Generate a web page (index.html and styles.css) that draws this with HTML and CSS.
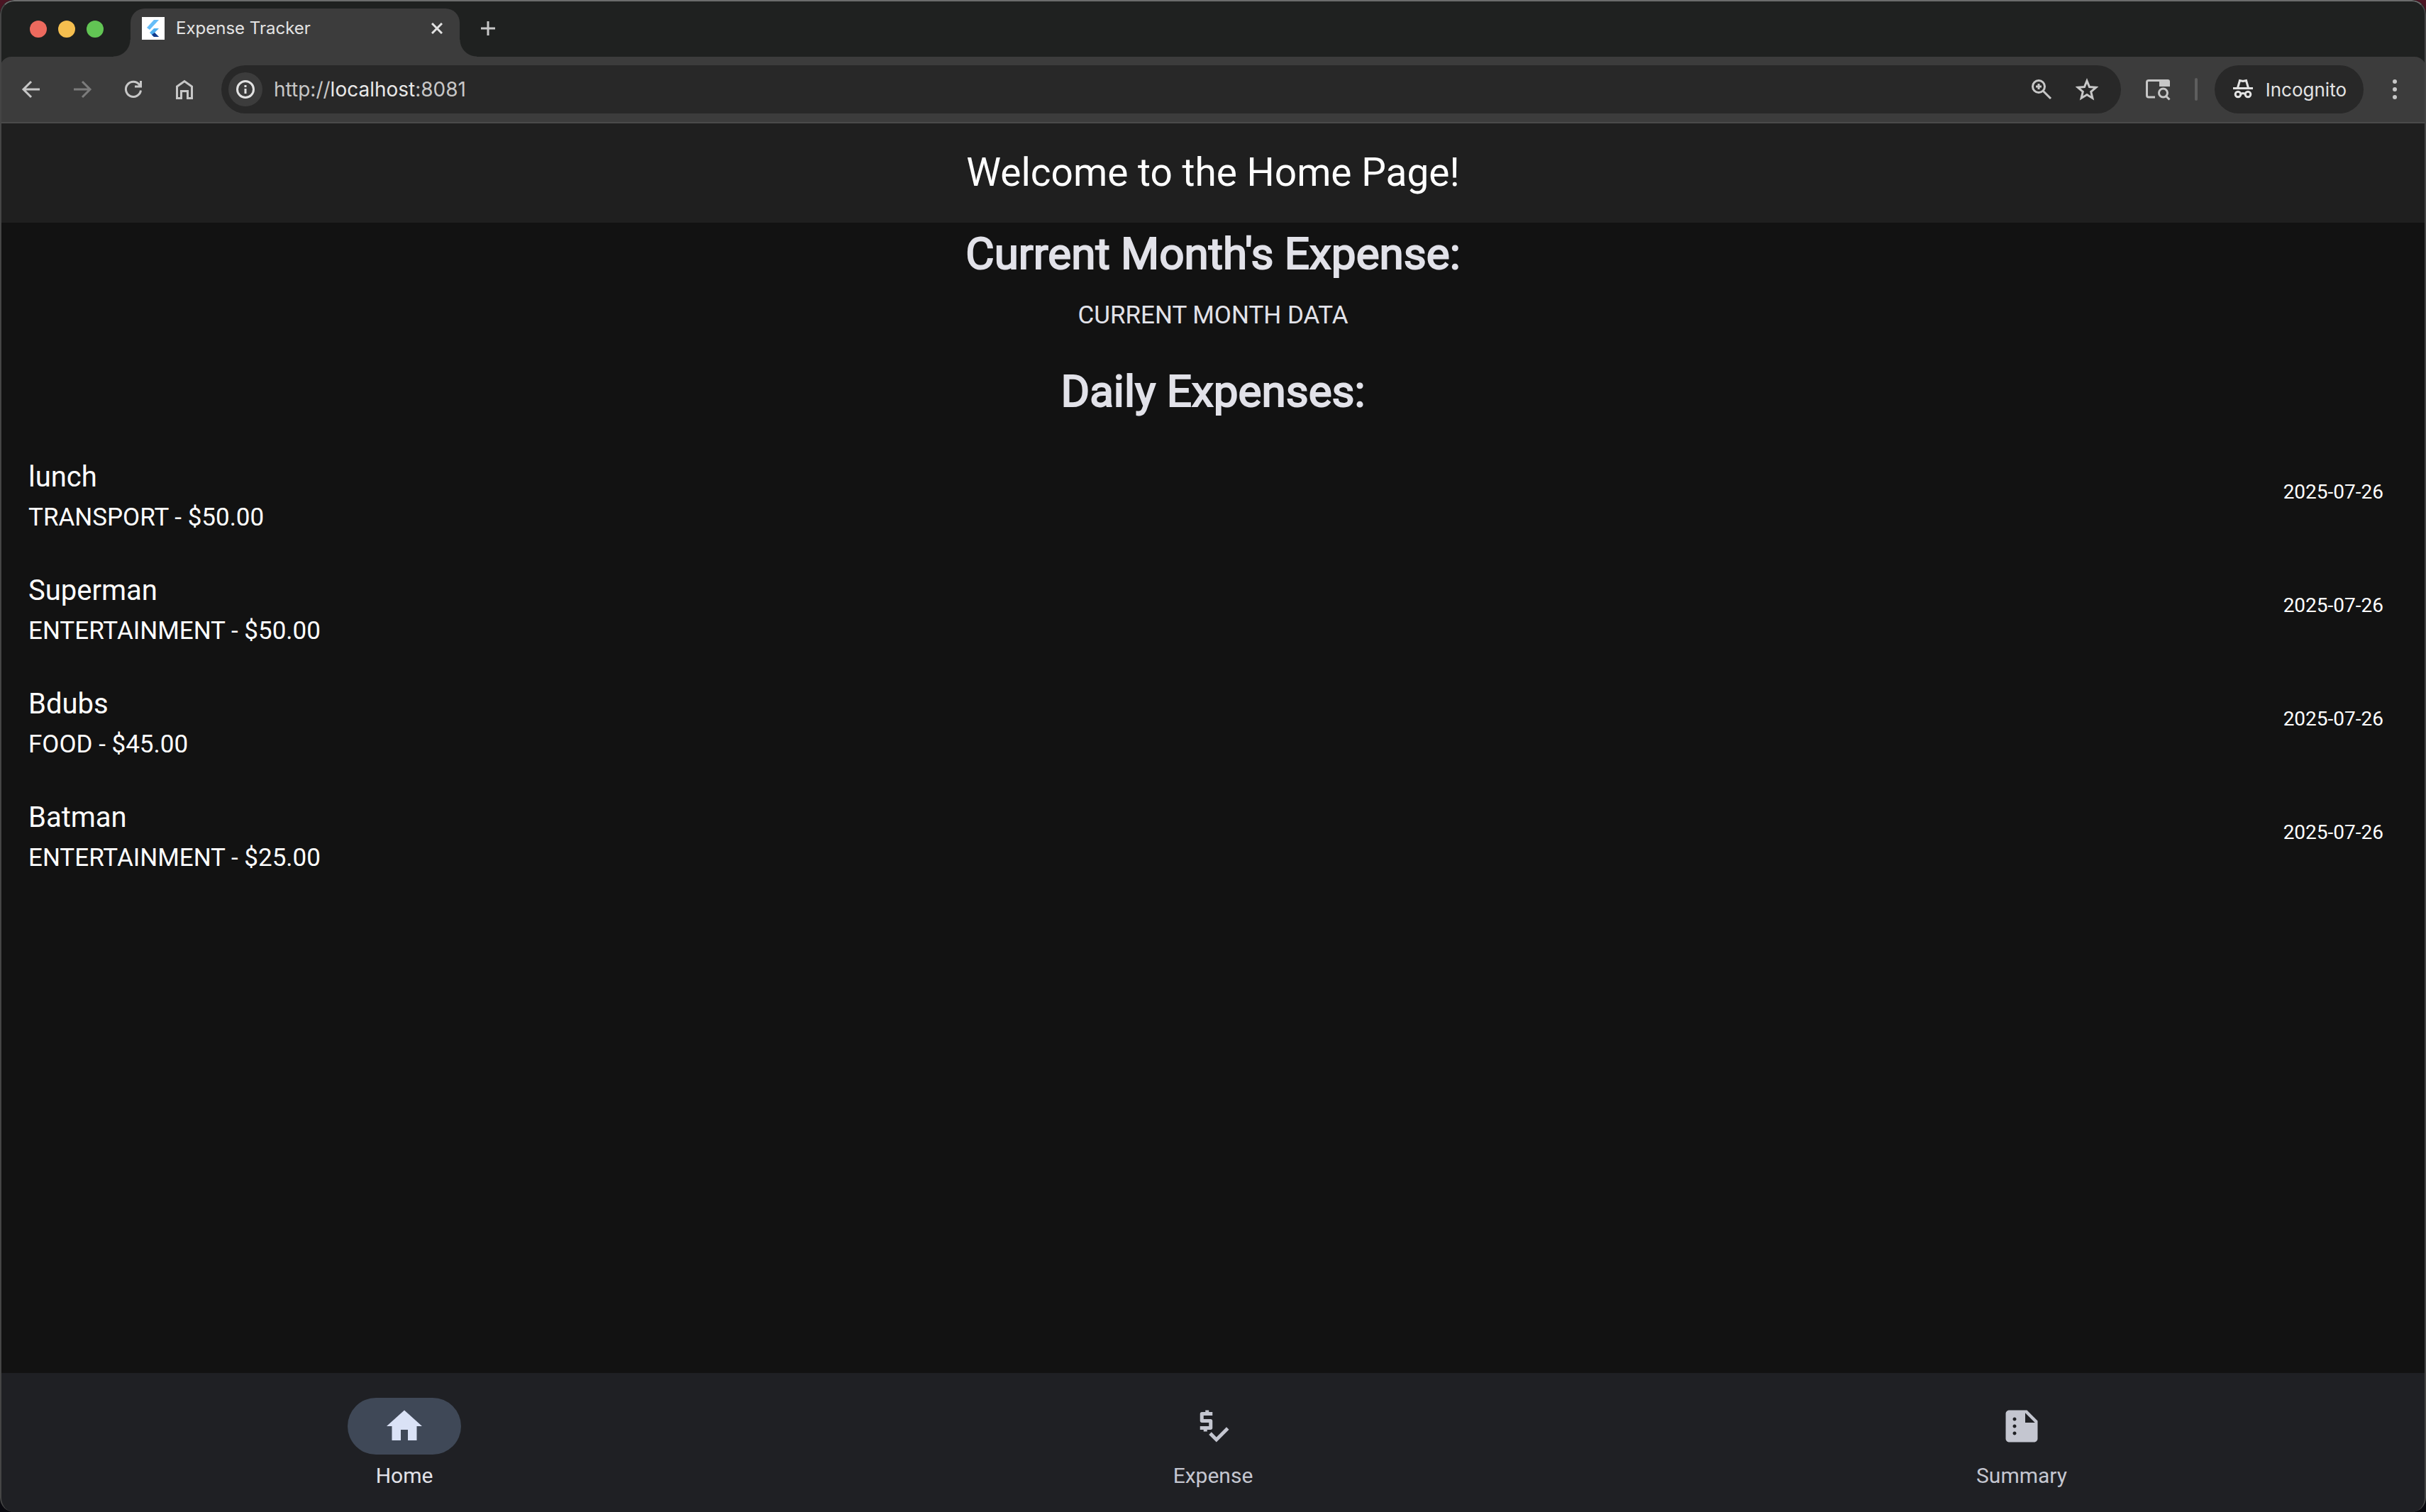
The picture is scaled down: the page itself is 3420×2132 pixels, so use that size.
FILE: index.html
```html
<!DOCTYPE html>
<html lang="en">
<head>
<meta charset="utf-8">
<title>Expense Tracker</title>
<link rel="stylesheet" href="styles.css">
</head>
<body>
<div class="window">
  <header class="browser">
    <div class="tab-strip">
      <div class="lights"><span class="light light-close"></span><span class="light light-min"></span><span class="light light-max"></span></div>
      <div class="tab">
        <svg class="favicon" viewBox="0 0 32 32"><rect width="32" height="32" fill="#fff"/><path d="M17 4h7L11 18l-4-3z" fill="#66bdf8"/><path d="M17 16h7l-6 6 6 6h-7l-6-6z" fill="#4fb0f0"/><path d="M14 25l4-3 6 6h-7z" fill="#123a8c"/></svg>
        <span class="tab-title">Expense Tracker</span>
        <button class="icon-button tab-close" aria-label="Close tab"><svg class="icon-small" viewBox="0 0 16 16"><path class="line" d="M1 1l14 14M15 1L1 15"/></svg></button>
      </div>
      <button class="icon-button new-tab" aria-label="New tab"><svg class="icon-plus" viewBox="0 0 20 20"><path class="line" d="M10 0v20M0 10h20"/></svg></button>
    </div>
    <div class="toolbar">
      <nav class="history" aria-label="Browser">
        <button class="icon-button" aria-label="Back"><svg class="icon" viewBox="0 0 32 32"><path class="line" d="M28 16H5M16 5L5 16l11 11"/></svg></button>
        <button class="icon-button dim" aria-label="Forward"><svg class="icon" viewBox="0 0 32 32"><path class="line" d="M4 16h23M16 5l11 11-11 11"/></svg></button>
        <button class="icon-button" aria-label="Reload"><svg class="icon" viewBox="0 0 32 32"><path class="line" d="M26.500 17.500A10.600 10.600 0 1 1 24.500 9.500L26 12M26.500 4v8H18"/></svg></button>
        <button class="icon-button" aria-label="Home page"><svg class="icon" viewBox="0 0 32 32"><path class="line" d="M5.500 12L16 4.500 26.500 12v16.500h-6V18.500h-9v10h-6z"/></svg></button>
      </nav>
      <div class="omnibox">
        <button class="icon-button site-info" aria-label="Site information"><svg class="icon" viewBox="0 0 32 32"><circle class="line" cx="16" cy="16" r="11.500"/><path class="line" d="M16 15v7M16 10v3"/></svg></button>
        <span class="url">http://<b>localhost</b>:8081</span>
        <button class="icon-button" aria-label="Zoom"><svg class="icon" viewBox="0 0 32 32"><circle class="line" cx="12" cy="12" r="8.500"/><path class="line" d="M18 18L29 29M12 8v8M8 12h8"/></svg></button>
        <button class="icon-button" aria-label="Bookmark"><svg class="icon" viewBox="0 0 32 32"><path class="line" d="M16 4l3.500 8.600 9.300.7-7.100 6 2.200 9.100-7.900-4.900-7.900 4.900 2.200-9.100-7.100-6 9.300-.7z"/></svg></button>
      </div>
      <button class="icon-button side-search" aria-label="Side search"><svg class="icon-wide" viewBox="0 0 36 32"><path class="line" d="M14 27H5a2.500 2.500 0 0 1-2.500-2.500v-19A2.500 2.500 0 0 1 5 3.500h24"/><path d="M20 2h12a3 3 0 0 1 3 3v7H20z" fill="currentColor"/><circle class="line" cx="25.500" cy="21" r="6"/><path class="line" d="M29.500 25.500l5 5"/></svg></button>
      <span class="divider"></span>
      <button class="incognito"><svg class="icon" viewBox="0 0 32 32"><path class="line" d="M2 14.500h28"/><path class="line" d="M8.500 14L11.500 3.500l4.500 1 4.500-1 3 10.500"/><circle class="line" cx="9" cy="23" r="3.800"/><circle class="line" cx="23" cy="23" r="3.800"/><path class="line" d="M13 22.500q3-2 6 0"/></svg>Incognito</button>
      <button class="icon-button menu" aria-label="Menu"><svg class="icon" viewBox="0 0 32 32" fill="currentColor"><circle cx="16" cy="5" r="3"/><circle cx="16" cy="16" r="3"/><circle cx="16" cy="27" r="3"/></svg></button>
    </div>
  </header>

  <h1 class="app-bar">Welcome to the Home Page!</h1>
  <main class="content">
    <h2 class="heading">Current Month's Expense:</h2>
    <p class="month-data">CURRENT MONTH DATA</p>
    <h2 class="heading">Daily Expenses:</h2>
    <ul class="expenses">
      <li class="expense"><div><p class="name">lunch</p><p class="detail">TRANSPORT - $50.00</p></div><time class="date">2025-07-26</time></li>
      <li class="expense"><div><p class="name">Superman</p><p class="detail">ENTERTAINMENT - $50.00</p></div><time class="date">2025-07-26</time></li>
      <li class="expense"><div><p class="name">Bdubs</p><p class="detail">FOOD - $45.00</p></div><time class="date">2025-07-26</time></li>
      <li class="expense"><div><p class="name">Batman</p><p class="detail">ENTERTAINMENT - $25.00</p></div><time class="date">2025-07-26</time></li>
    </ul>
  </main>

  <nav class="bottom-nav" aria-label="Sections">
    <a class="destination selected" href="#home"><span class="indicator"><svg class="nav-icon" viewBox="0 0 24 24"><path d="M10 20v-6h4v6h5v-8h3L12 3 2 12h3v8z"/></svg></span>Home</a>
    <a class="destination" href="#expense"><span class="indicator"><svg class="nav-icon" viewBox="0 0 24 24"><path d="M11 13V9c0-.55-.45-1-1-1H6V6h5V4H9V3H7v1H5c-.55 0-1 .45-1 1v4c0 .55.45 1 1 1h4v2H4v2h2v1h2v-1h2c.55 0 1-.45 1-1z" transform="translate(.7 0)"/><path d="M19.590 12.520l-5.660 5.650-2.830-2.830-1.410 1.420L13.930 21 21 13.930z"/></svg></span>Expense</a>
    <a class="destination" href="#summary"><span class="indicator"><svg class="nav-icon" viewBox="0 0 24 24"><path d="M15 3H5c-1.100 0-1.990.900-1.990 2L3 19c0 1.100.890 2 1.990 2H19c1.100 0 2-.900 2-2V9l-6-6zM8 17c-.550 0-1-.450-1-1s.450-1 1-1 1 .450 1 1-.450 1-1 1zm0-4c-.550 0-1-.450-1-1s.450-1 1-1 1 .450 1 1-.450 1-1 1zm0-4c-.550 0-1-.450-1-1s.450-1 1-1 1 .450 1 1-.450 1-1 1zm6 1V4.500l5.500 5.500H14z"/></svg></span>Summary</a>
  </nav>
</div>
</body>
</html>
```
FILE: styles.css
```css
* { box-sizing: border-box; }
body { margin: 0; background: linear-gradient(#4a1523, #0a0a10); }
h1, h2, p, ul { margin: 0; padding: 0; font-weight: 400; }
ul { list-style: none; }
button { border: 0; padding: 0; background: none; color: inherit; font: inherit; }

.window {
  position: relative;
  display: flex;
  flex-direction: column;
  min-height: 100vh;
  overflow: hidden;
  border-radius: 20px;
  background: #121212;
  color: #fff;
  font-family: Roboto, "Liberation Sans", sans-serif;
}
/* Hairline edge of the window, over its content */
.window::after {
  content: "";
  position: absolute;
  inset: 0;
  border: 2px solid #454545;
  border-top-color: #6b6c6c;
  border-bottom: 0;
  border-radius: 20px;
  pointer-events: none;
}

/* Browser frame */
.browser {
  background: #1f2120;
  color: #c7c7c7;
  font-family: Inter, "Liberation Sans", sans-serif;
}
.tab-strip { display: flex; height: 80px; padding-top: 12px; }
.lights { display: flex; gap: 16px; width: 184px; padding: 17px 0 0 42px; }
.light { width: 24px; height: 24px; border-radius: 50%; }
.light-close { background: #ed6a5e; }
.light-min { background: #f5bf4f; }
.light-max { background: #62c554; }
.tab {
  position: relative;
  display: flex;
  align-items: center;
  gap: 16px;
  width: 464px;
  padding: 0 16px 12px;
  border-radius: 20px 20px 0 0;
  background: #3c3c3c;
}
.tab::before, .tab::after {
  content: "";
  position: absolute;
  bottom: 0;
  width: 24px;
  height: 24px;
}
.tab::before { right: 100%; background: radial-gradient(circle at 0 0, transparent 23px, #3c3c3c 24px); }
.tab::after { left: 100%; background: radial-gradient(circle at 100% 0, transparent 23px, #3c3c3c 24px); }
.favicon { width: 32px; height: 32px; }
.tab-title { flex: 1; color: #e3e3e3; font-size: 24px; line-height: 32px; }
.tab-close { width: 32px; height: 32px; color: #e3e3e3; }
.new-tab { width: 80px; height: 56px; }

.icon-button { display: flex; align-items: center; justify-content: center; }
.icon, .icon-wide, .icon-small, .icon-plus { display: block; }
.icon { width: 32px; height: 32px; }
.icon-wide { width: 36px; height: 32px; }
.icon-small { width: 16px; height: 16px; }
.icon-plus { width: 20px; height: 20px; }
.line { fill: none; stroke: currentColor; stroke-width: 3; }

.toolbar {
  display: flex;
  align-items: center;
  height: 94px;
  padding: 0 28px;
  border-bottom: 2px solid #4a4a4a;
  border-radius: 16px 16px 0 0;
  background: #3c3c3c;
}
.history { display: flex; gap: 40px; margin-right: 36px; }
.dim { color: #7c7c7c; }
.omnibox {
  display: flex;
  flex: 1;
  align-items: center;
  gap: 32px;
  height: 68px;
  padding: 0 32px 0 10px;
  border-radius: 34px;
  background: #282828;
}
.site-info { width: 48px; height: 48px; margin-right: -16px; border-radius: 50%; background: #3c3c3c; color: #e3e3e3; }
.url { flex: 1; font-size: 28px; line-height: 40px; }
.url b { color: #e8e8e8; font-weight: 400; }
.side-search { margin-left: 34px; }
.divider { width: 4px; height: 32px; margin: 0 24px 0 34px; border-radius: 2px; background: #5e5e5e; }
.incognito {
  display: flex;
  align-items: center;
  gap: 16px;
  height: 68px;
  margin-right: 28px;
  padding: 0 24px;
  border-radius: 34px;
  background: #282828;
  color: #e3e3e3;
  font-size: 26px;
  font-weight: 400;
}

/* Expense page */
.app-bar {
  height: 140px;
  background: #1f1f1f;
  font-size: 55px;
  line-height: 138px;
  text-align: center;
}
.content { flex: 1; }
.heading {
  color: #e2e2e9;
  font-size: 62px;
  line-height: 88px;
  text-align: center;
  -webkit-text-stroke: 2px currentColor;
}
.month-data {
  padding: 18px 0 38px;
  color: #e2e2e9;
  font-size: 35px;
  line-height: 50px;
  text-align: center;
}
.expenses { padding-top: 18px; }
.expense {
  display: flex;
  align-items: center;
  justify-content: space-between;
  height: 160px;
  padding: 0 60px 0 40px;
}
.name { padding-top: 12px; font-size: 40px; line-height: 60px; }
.detail { font-size: 35px; line-height: 54px; }
.date { font-size: 28px; line-height: 40px; }

.bottom-nav { display: flex; height: 196px; padding-top: 35px; background: #1f2024; }
.destination {
  display: flex;
  flex: 1;
  flex-direction: column;
  align-items: center;
  gap: 10px;
  color: #c4c6d0;
  font-size: 30px;
  line-height: 40px;
  text-decoration: none;
}
.indicator { display: flex; align-items: center; justify-content: center; width: 160px; height: 80px; border-radius: 40px; }
.nav-icon { width: 60px; height: 60px; fill: currentColor; }
.selected { color: #e2e2e9; }
.selected .indicator { background: #3f4857; color: #dae2f6; }
```
